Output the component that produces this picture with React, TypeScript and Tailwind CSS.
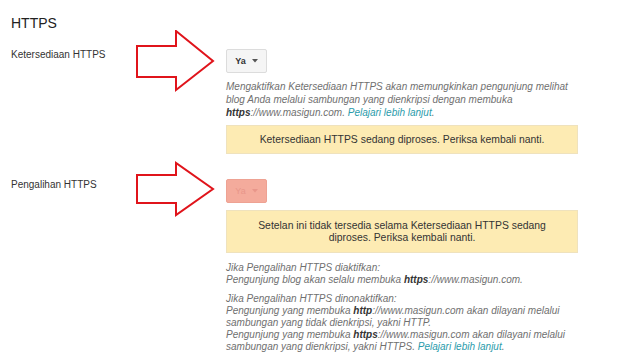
import React from 'react';

// --- Sub-Components ---
const Caret = ({ color }: { color: string }) => (
  <svg width="6" height="4" viewBox="0 0 6 4" className="ml-[6px]">
    <polygon points="0,0 6,0 3,3.5" fill={color} />
  </svg>
);

const Dropdown = ({ disabled }: { disabled?: boolean }) => (
  <div
    className={`w-[41px] h-[24px] flex items-center justify-center rounded-[2px] border ${
      disabled ? 'bg-[#f4ab9c] border-[#eea293] text-[#e8968a]' : 'bg-[#f5f5f5] border-[#dcdcdc] text-[#333]'
    }`}
  >
    <span className={`text-[9px] leading-none ${disabled ? 'font-normal' : 'font-bold'}`}>Ya</span>
    <Caret color={disabled ? '#e8968a' : '#555'} />
  </div>
);

const Link = () => <span className="text-[#2a9bab]">Pelajari lebih lanjut</span>;

const Notice = ({ children, className = '' }: { children: React.ReactNode; className?: string }) => (
  <div
    className={`w-[352px] flex items-center justify-center text-center bg-[#fdebb3] border border-[#efe2bd] text-[#333] text-[10.4px] leading-[12px] ${className}`}
  >
    {children}
  </div>
);

// Red outlined arrows pasted over the settings page
const Arrow1 = () => (
  <svg width="80" height="64" viewBox="0 0 80 64" className="absolute left-[136px] top-[30px]">
    <polygon points="1,16 40,16 40,1 77,31 40,60 40,47 1,47" fill="white" stroke="#e0141b" strokeWidth="2" />
  </svg>
);

const Arrow2 = () => (
  <svg width="80" height="58" viewBox="0 0 80 58" className="absolute left-[136px] top-[160px]">
    <polygon points="1,15 40,15 40,3 77,29 40,55 40,43 1,43" fill="white" stroke="#e0141b" strokeWidth="2" />
  </svg>
);

// --- Main Component ---
export default function App() {
  return (
    <div
      className="relative w-[640px] h-[363px] overflow-hidden bg-white text-[#333]"
      style={{ fontFamily: '"Liberation Sans", Arial, sans-serif' }}
    >
      <h2 className="pl-[11px] pt-[15px] text-[14px] leading-[16px] font-normal text-[#222]">HTTPS</h2>

      {/* Ketersediaan HTTPS */}
      <div className="flex mt-[18px]">
        <div className="w-[226px] pl-[11px] text-[10px] leading-[12px] text-[#333]">Ketersediaan HTTPS</div>
        <div className="flex flex-col">
          <Dropdown />
          <p className="mt-[7px] text-[10px] leading-[13px] italic text-[#707070] whitespace-nowrap">
            Mengaktifkan Ketersediaan HTTPS akan memungkinkan pengunjung melihat
            <br />
            blog Anda melalui sambungan yang dienkripsi dengan membuka
            <br />
            <b className="text-[#333]">https</b>://www.masigun.com. <Link />.
          </p>
          <Notice className="mt-[6px] h-[29px]">Ketersediaan HTTPS sedang diproses. Periksa kembali nanti.</Notice>
        </div>
      </div>

      {/* Pengalihan HTTPS */}
      <div className="flex mt-[25px]">
        <div className="w-[226px] pl-[11px] text-[10px] leading-[12px] text-[#333]">Pengalihan HTTPS</div>
        <div className="flex flex-col">
          <Dropdown disabled />
          <Notice className="mt-[7px] h-[43px]">
            Setelan ini tidak tersedia selama Ketersediaan HTTPS sedang
            <br />
            diproses. Periksa kembali nanti.
          </Notice>
          <div className="mt-[9px] text-[10px] leading-[12px] italic text-[#707070] whitespace-nowrap">
            <p>Jika Pengalihan HTTPS diaktifkan:</p>
            <p>
              Pengunjung blog akan selalu membuka <b className="text-[#333]">https</b>://www.masigun.com.
            </p>
            <p className="mt-[7px]">Jika Pengalihan HTTPS dinonaktifkan:</p>
            <p>
              Pengunjung yang membuka <b className="text-[#333]">http</b>://www.masigun.com akan dilayani melalui
              <br />
              sambungan yang tidak dienkripsi, yakni HTTP.
            </p>
            <p>
              Pengunjung yang membuka <b className="text-[#333]">https</b>://www.masigun.com akan dilayani melalui
              <br />
              sambungan yang dienkripsi, yakni HTTPS. <Link />.
            </p>
          </div>
        </div>
      </div>

      <Arrow1 />
      <Arrow2 />
    </div>
  );
}
